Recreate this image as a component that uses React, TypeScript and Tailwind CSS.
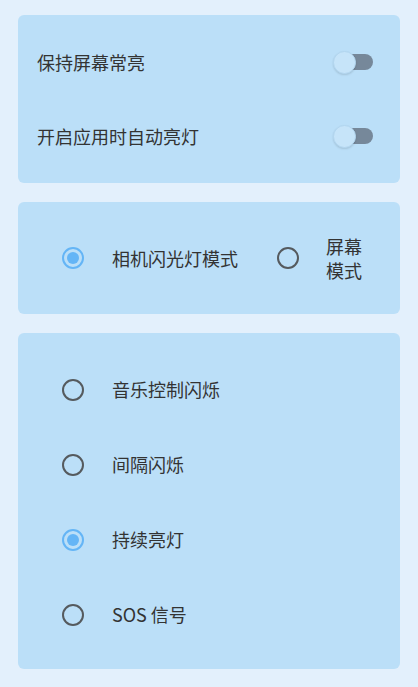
import React from "react";

const font = { fontFamily: '"Noto Sans CJK SC", "Noto Sans", sans-serif' };

function Switch() {
  return (
    <div className="relative w-[40px] h-[24px] flex items-center">
      <div className="absolute left-[12px] w-[28px] h-[16px] rounded-full bg-[#76889a]" />
      <div className="absolute left-0 w-[23px] h-[23px] rounded-full bg-[#c6e4f9] border border-[#b2d6f0] shadow-[0_1px_2px_rgba(0,0,0,0.12)]" />
    </div>
  );
}

function Radio({ checked }: { checked?: boolean }) {
  return checked ? (
    <div className="w-[22px] h-[22px] rounded-full border-2 border-[#64b5f6] flex items-center justify-center shrink-0">
      <div className="w-[12px] h-[12px] rounded-full bg-[#64b5f6]" />
    </div>
  ) : (
    <div className="w-[22px] h-[22px] rounded-full border-2 border-[#555a5e] shrink-0" />
  );
}

export default function App() {
  return (
    <div className="w-[418px] h-[687px] bg-[#e3f0fc] pt-[15px] px-[18px] flex flex-col gap-[19px] text-[18px] text-[#333333]" style={font}>
      <div className="bg-[#bbdff8] rounded-[6px] py-[10px] flex flex-col">
        <div className="h-[74px] flex items-center justify-between pl-[19px] pr-[27px]">
          <span>保持屏幕常亮</span>
          <Switch />
        </div>
        <div className="h-[74px] flex items-center justify-between pl-[19px] pr-[27px]">
          <span>开启应用时自动亮灯</span>
          <Switch />
        </div>
      </div>

      <div className="bg-[#bbdff8] rounded-[6px] h-[112px] flex items-center pl-[44px]">
        <Radio checked />
        <span className="ml-[28px]">相机闪光灯模式</span>
        <div className="ml-[39px]"><Radio /></div>
        <span className="ml-[27px] w-[40px] leading-[24px]">屏幕模式</span>
      </div>

      <div className="bg-[#bbdff8] rounded-[6px] pt-[19px] pb-[17px] flex flex-col">
        {[
          ["音乐控制闪烁", false],
          ["间隔闪烁", false],
          ["持续亮灯", true],
          ["SOS 信号", false],
        ].map(([t, c]) => (
          <div key={t as string} className="h-[75px] flex items-center pl-[44px]">
            <Radio checked={c as boolean} />
            <span className="ml-[28px]">{t as string}</span>
          </div>
        ))}
      </div>
    </div>
  );
}
